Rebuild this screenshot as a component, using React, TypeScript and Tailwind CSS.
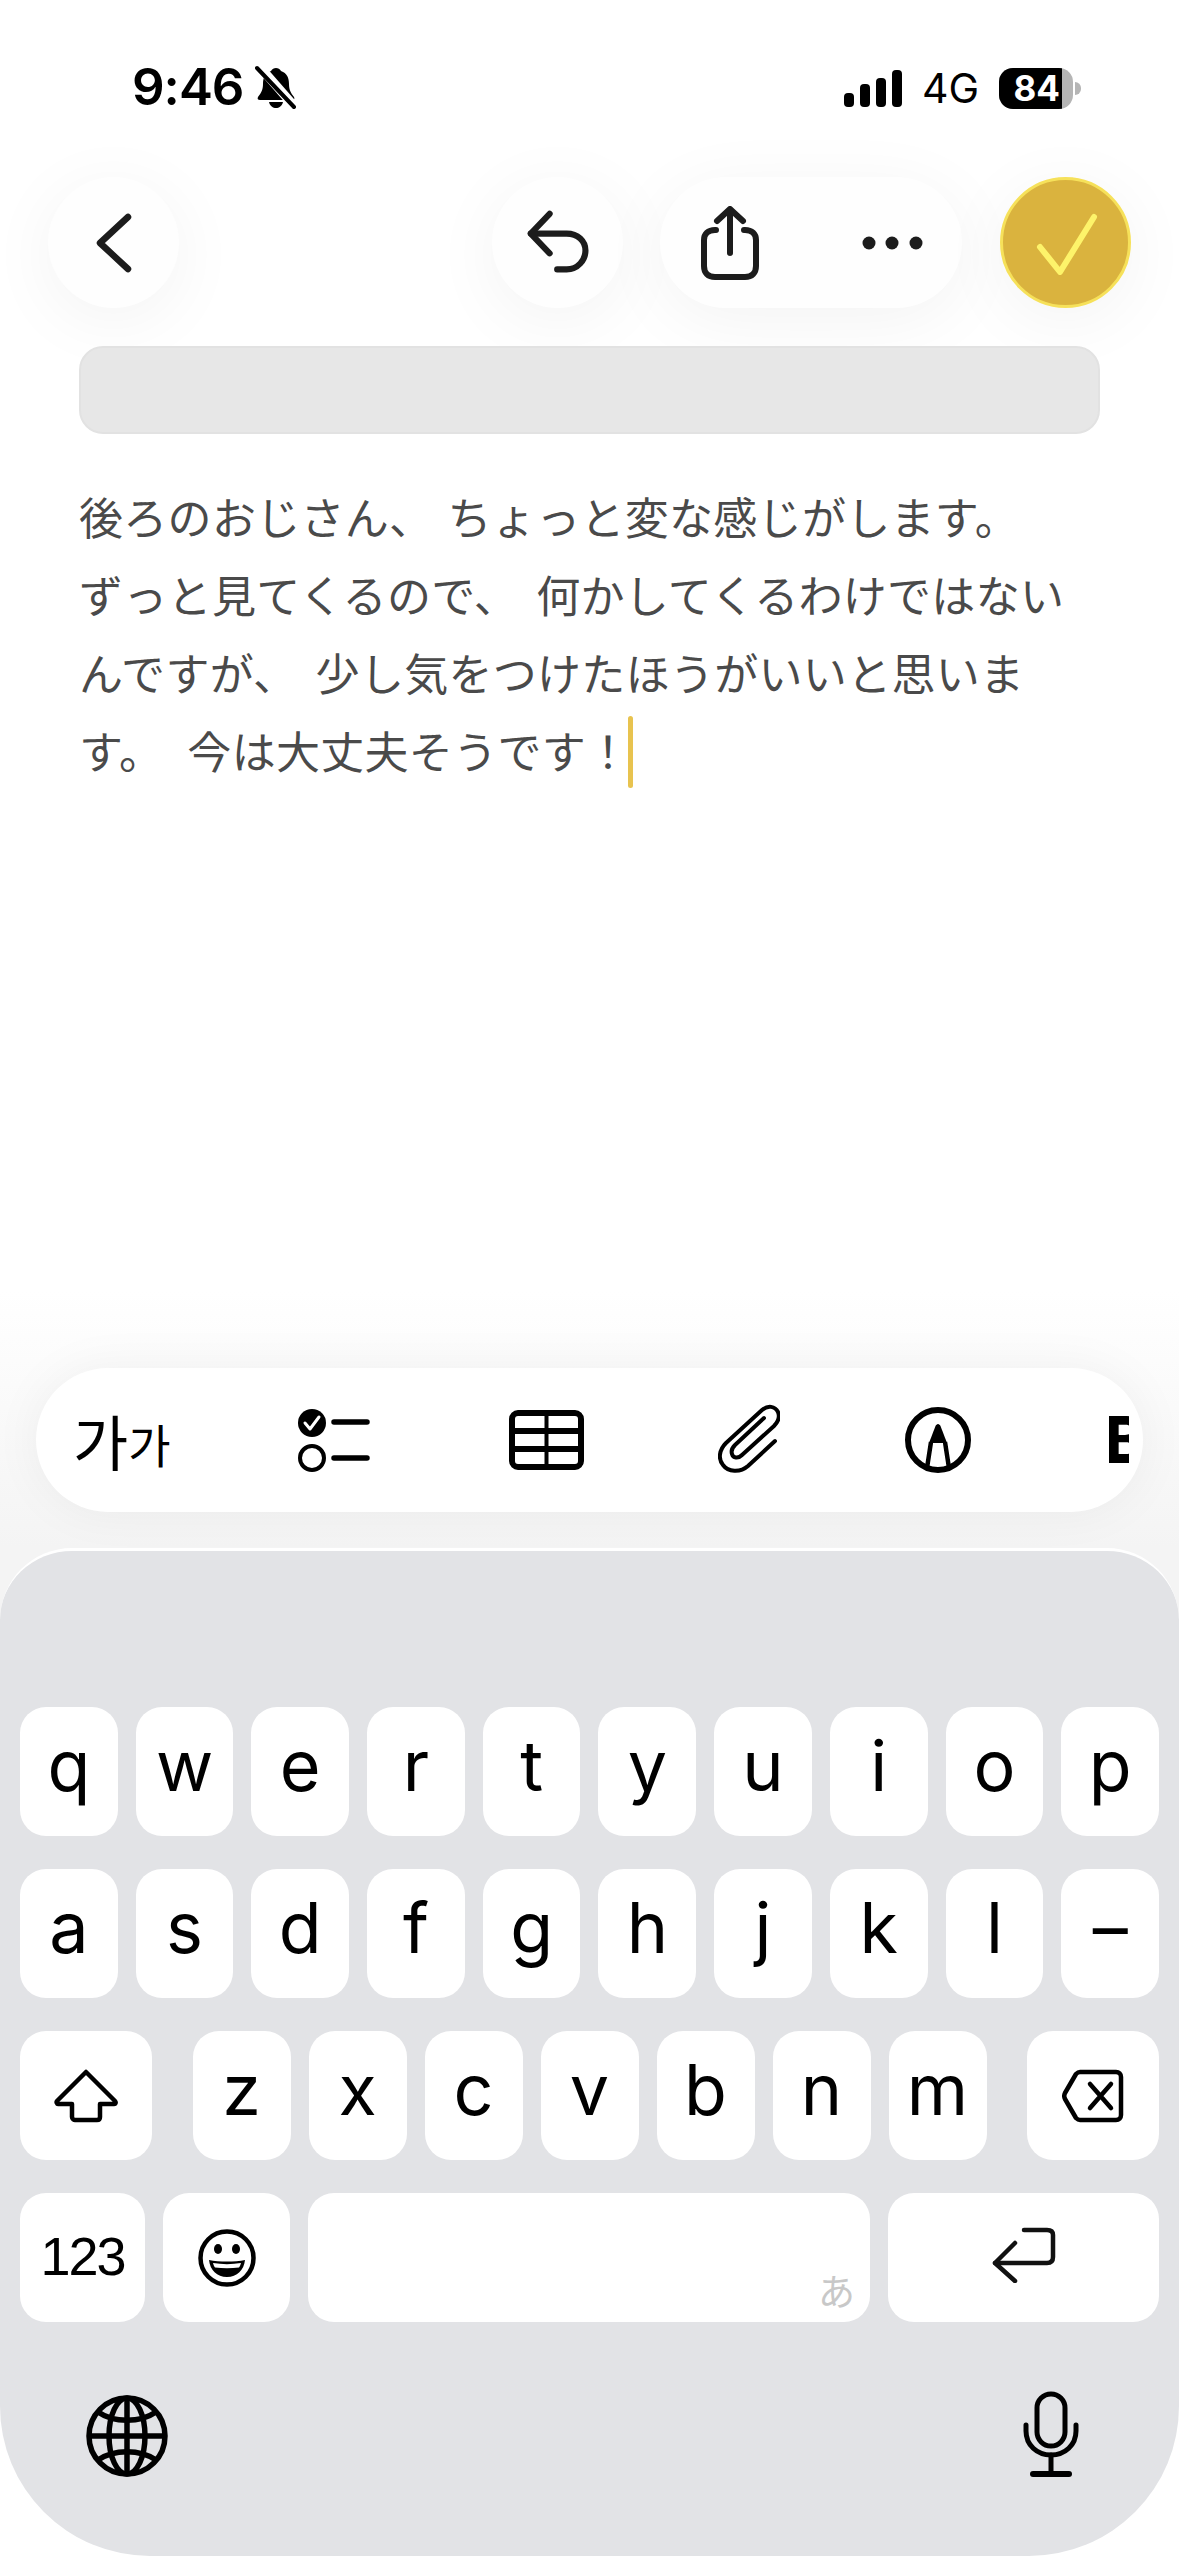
import React from 'react';

const ROW_ONE = ['q', 'w', 'e', 'r', 't', 'y', 'u', 'i', 'o', 'p'];
const ROW_TWO = ['a', 's', 'd', 'f', 'g', 'h', 'j', 'k', 'l', '–'];
const ROW_THREE = ['z', 'x', 'c', 'v', 'b', 'n', 'm'];

const Key: React.FC<{ label: string; className?: string }> = ({ label, className = '' }) => (
  <div
    className={`flex h-[129px] items-center justify-center rounded-[26px] bg-white pb-[12px] font-['Inter',sans-serif] text-[70px] leading-none font-normal text-black ${className}`}
  >
    {label}
  </div>
);

const IconKey: React.FC<{ className?: string; children: React.ReactNode }> = ({ className = '', children }) => (
  <div className={`flex h-[129px] items-center justify-center rounded-[26px] bg-white ${className}`}>{children}</div>
);

const CircleButton: React.FC<{ className?: string; children: React.ReactNode }> = ({ className = 'bg-[#fefefe]', children }) => (
  <div
    className={`flex h-[131px] w-[131px] shrink-0 items-center justify-center rounded-full shadow-[0_12px_70px_rgba(0,0,0,0.05)] ${className}`}
  >
    {children}
  </div>
);

const StatusBar = () => (
  <div className="flex h-[177px] items-start justify-between pt-[61px] pr-[98px] pl-[132px]">
    <div className="flex items-center gap-[12px]">
      <span className="font-['Inter',sans-serif] text-[51px] leading-[52px] font-semibold tracking-[-1px] text-black">9:46</span>
      <svg width="42" height="44" viewBox="0 0 42 44">
        <path d="M21 3c2 0 4 1 5 3 6 2 8 7 8 13 0 6 2 9 5 13 1 2 0 3-2 3H5c-2 0-3-1-2-3 3-4 5-7 5-13 0-6 2-11 8-13 1-2 3-3 5-3z" fill="#000" />
        <path d="M14 37h14c-1 4-4 6-7 6s-6-2-7-6z" fill="#000" />
        <path d="M5 2l34 39" stroke="#fff" strokeWidth="9" />
        <path d="M2 3l37 39" stroke="#000" strokeWidth="4" strokeLinecap="round" />
      </svg>
    </div>
    <div className="mt-[6px] flex items-center">
      <svg width="58" height="37" viewBox="0 0 58 37" fill="#000">
        <rect x="0" y="23" width="10" height="14" rx="4" />
        <rect x="16" y="14" width="10" height="23" rx="4" />
        <rect x="32" y="8" width="10" height="29" rx="4" />
        <rect x="48" y="0" width="10" height="37" rx="4" />
      </svg>
      <span className="ml-[20px] font-['Inter',sans-serif] text-[41px] leading-[42px] font-normal text-black">4G</span>
      <div className="relative ml-[20px] flex h-[41px] w-[74px] overflow-hidden rounded-[14px] bg-[#b5b5b5]">
        <div className="flex h-full w-[63px] items-center justify-end bg-black pr-[2px] font-['Inter',sans-serif] text-[35px] leading-none font-bold text-white">
          84
        </div>
      </div>
      <div className="ml-[2px] h-[13px] w-[6px] rounded-r-full bg-[#b5b5b5]" />
    </div>
  </div>
);

const Header = () => (
  <div className="flex h-[131px] items-center px-[48px]">
    <CircleButton>
      <svg width="44" height="64" viewBox="0 0 44 64" fill="none" stroke="#1c1c1c" strokeWidth="6.5" strokeLinecap="round" strokeLinejoin="round">
        <path d="M36 6 8 32l28 26" />
      </svg>
    </CircleButton>
    <CircleButton className="ml-auto bg-[#fefefe] pl-[4px]">
      <svg width="68" height="66" viewBox="0 0 72 70" fill="none" stroke="#1c1c1c" strokeWidth="6.5" strokeLinecap="round" strokeLinejoin="round">
        <path d="M25 4 5 25l20 21" />
        <path d="M5 25h38c12 0 20 8 20 18s-8 20-20 20H33" />
      </svg>
    </CircleButton>
    <div className="ml-[37px] flex h-[131px] w-[302px] items-center rounded-full bg-[#fefefe] pl-[41px] shadow-[0_12px_70px_rgba(0,0,0,0.05)]">
      <svg width="58" height="74" viewBox="0 0 58 74" fill="none" stroke="#1c1c1c" strokeWidth="6" strokeLinecap="round" strokeLinejoin="round">
        <path d="M15 24H14C7 24 3 28 3 34v26c0 7 4 11 11 11h30c7 0 11-4 11-11V34c0-6-4-10-11-10h-1" />
        <path d="M29 47V4" />
        <path d="M16 15 29 3l13 12" />
      </svg>
      <svg className="ml-[103px]" width="62" height="14" viewBox="0 0 62 14" fill="#1c1c1c">
        <circle cx="7" cy="7" r="6.5" />
        <circle cx="30" cy="7" r="6.5" />
        <circle cx="54" cy="7" r="6.5" />
      </svg>
    </div>
    <CircleButton className="ml-[38px] border-[3px] border-[#f6e15a] bg-[#dab33e]">
      <svg width="64" height="64" viewBox="0 0 64 64" fill="none" stroke="#fdf36a" strokeWidth="6" strokeLinecap="round" strokeLinejoin="round">
        <path d="M6 36l20 25L60 6" />
      </svg>
    </CircleButton>
  </div>
);

const Toolbar = () => (
  <div className="mx-[36px] flex h-[144px] items-center overflow-hidden rounded-[72px] bg-white pl-[37px] shadow-[0_0_50px_rgba(0,0,0,0.05)]">
    <div className="flex w-[106px] shrink-0 items-end font-['Noto_Sans_CJK_KR',sans-serif] font-normal text-black">
      <span className="text-[60px] leading-[66px]">가</span>
      <span className="text-[46px] leading-[60px]">가</span>
    </div>
    <svg className="ml-[119px] shrink-0" width="72" height="64" viewBox="0 0 72 64">
      <circle cx="14" cy="15" r="14" fill="#000" />
      <path d="M7 15l5 6 9-12" fill="none" stroke="#fff" strokeWidth="3" strokeLinecap="round" strokeLinejoin="round" />
      <circle cx="14" cy="50" r="12" fill="none" stroke="#000" strokeWidth="4" />
      <path d="M36 14h33M36 50h33" stroke="#000" strokeWidth="5.5" strokeLinecap="round" />
    </svg>
    <svg className="ml-[139px] shrink-0" width="75" height="60" viewBox="0 0 75 60" fill="none" stroke="#000">
      <rect x="3" y="3" width="69" height="54" rx="6" strokeWidth="6" />
      <path d="M2 21h71M2 39h71" strokeWidth="6" />
      <path d="M37.500 4v52" strokeWidth="4" />
    </svg>
    <svg className="-mt-[2px] ml-[134px] shrink-0" width="62" height="70" viewBox="0 0 62 70" fill="none" stroke="#000" strokeWidth="4" strokeLinecap="round" strokeLinejoin="round">
      <path d="M57 37 30 62C22 69 10 68 5 61 0 55 1 46 8 39L44 6c6-5 13-4 16 2 2 5 0 10-4 14L24 51c-4 4-9 3-10-1-1-3 0-6 3-9l29-27" />
    </svg>
    <svg className="ml-[124px] shrink-0" width="68" height="68" viewBox="0 0 68 68" fill="none">
      <circle cx="34" cy="34" r="30" stroke="#000" strokeWidth="6" />
      <path d="M34 18c1 0 2 1 2.500 2L43 37H25l6.500-17c.5-1 1.500-2 2.500-2z" fill="#000" />
      <path d="M27 36l-4 26M41 36l4 26" stroke="#000" strokeWidth="4.500" />
    </svg>
    <div className="ml-[137px] w-[20px] shrink-0 overflow-hidden">
      <span className="-ml-[5px] block font-['Inter',sans-serif] text-[64px] leading-none font-extrabold text-black">B</span>
    </div>
  </div>
);

const Keyboard = () => (
  <div className="mt-[36px] flex h-[1008px] flex-col rounded-t-[72px] rounded-b-[150px] border-t-[3px] border-white bg-[#e2e3e6] px-[20px] pt-[156px]">
    <div className="grid grid-cols-10 gap-[18px]">
      {ROW_ONE.map((k) => (
        <Key key={k} label={k} />
      ))}
    </div>
    <div className="mt-[33px] grid grid-cols-10 gap-[18px]">
      {ROW_TWO.map((k) => (
        <Key key={k} label={k} />
      ))}
    </div>
    <div className="mt-[33px] flex justify-between">
      <IconKey className="w-[132px]">
        <svg width="64" height="54" viewBox="0 0 64 54" fill="none" stroke="#000" strokeWidth="4.500" strokeLinejoin="round">
          <path d="M32 3 3 32c-1 1 0 3 1 3h14v13c0 2 2 3 3 3h22c2 0 3-1 3-3V35h14c2 0 2-2 1-3z" />
        </svg>
      </IconKey>
      <div className="flex gap-[18px]">
        {ROW_THREE.map((k) => (
          <Key key={k} label={k} className="w-[98px]" />
        ))}
      </div>
      <IconKey className="w-[132px]">
        <svg width="62" height="54" viewBox="0 0 62 54" fill="none" stroke="#000" strokeWidth="4.500" strokeLinecap="round" strokeLinejoin="round">
          <path d="M18 3h36c3 0 5 2 5 5v38c0 3-2 5-5 5H18c-2 0-3-1-4-2L3 30c-1-2-1-4 0-6L14 5c1-1 2-2 4-2z" />
          <path d="M28 15l21 24M49 15 28 39" />
        </svg>
      </IconKey>
    </div>
    <div className="mt-[33px] flex gap-[18px]">
      <div className="flex h-[129px] w-[125px] items-center justify-center rounded-[26px] bg-white pb-[4px] font-['Liberation_Sans',sans-serif] text-[54px] leading-none tracking-[-2px] text-black">
        123
      </div>
      <IconKey className="w-[127px]">
        <svg width="58" height="58" viewBox="0 0 58 58" fill="none">
          <circle cx="29" cy="29" r="26.500" stroke="#000" strokeWidth="4.500" />
          <ellipse cx="20" cy="20" rx="4" ry="5" fill="#000" />
          <ellipse cx="38" cy="20" rx="4" ry="5" fill="#000" />
          <path d="M11 31c10 2 26 2 36 0-1 10-8 17-18 17S12 41 11 31z" fill="#000" />
          <path d="M15 34c9 1.500 19 1.500 28 0-.5 2-1 3-2 4.500-8 1-16 1-24 0-1-1.500-1.500-2.500-2-4.500z" fill="#fff" />
        </svg>
      </IconKey>
      <div className="relative h-[129px] flex-1 rounded-[26px] bg-white">
        <span className="absolute right-[15px] bottom-[13px] font-['Noto_Sans_CJK_JP',sans-serif] text-[37px] leading-none text-[#c8c8c8]">あ</span>
      </div>
      <IconKey className="w-[271px] pb-[5px]">
        <svg width="64" height="56" viewBox="0 0 64 56" fill="none" stroke="#111" strokeWidth="4.500" strokeLinecap="round" strokeLinejoin="round">
          <path d="M23 16 3 36l20 18" />
          <path d="M3 36h52c4 0 6-2 6-6V8c0-3-2-5-6-5H32" />
        </svg>
      </IconKey>
    </div>
    <div className="mt-[73px] flex items-start justify-between pr-[79px] pl-[66px]">
      <svg width="82" height="82" viewBox="0 0 82 82" fill="none" stroke="#000" strokeWidth="5.500">
        <circle cx="41" cy="41" r="38" />
        <ellipse cx="41" cy="41" rx="18" ry="38" />
        <path d="M41 3v76M3 41h76" />
        <path d="M12 17c16 11 42 11 58 0M12 65c16-11 42-11 58 0" />
      </svg>
      <svg className="-mt-[4px]" width="58" height="88" viewBox="0 0 58 88" fill="none" stroke="#000" strokeLinecap="round">
        <rect x="15" y="3" width="28" height="52" rx="14" strokeWidth="5" />
        <path d="M4 34v6c0 14 11 24 25 24s25-10 25-24v-6" strokeWidth="5" />
        <path d="M29 64v18" strokeWidth="5" />
        <path d="M11 83h36" strokeWidth="6" />
      </svg>
    </div>
  </div>
);

export default function App() {
  return (
    <div className="flex h-[2556px] w-[1179px] flex-col overflow-hidden bg-white">
      <StatusBar />
      <Header />
      <div className="mx-[79px] mt-[38px] h-[88px] rounded-[24px] border-2 border-[#e2e2e2] bg-[#e7e7e7]" />
      <div className="mt-[43px] flex-1 pl-[79px] font-['Noto_Sans_CJK_JP',sans-serif] text-[44px] leading-[78px] font-normal tracking-[0.3px] whitespace-nowrap text-[#4a4a4a]">
        <div className="[word-spacing:4px]">後ろのおじさん、 ちょっと変な感じがします。</div>
        <div className="[word-spacing:8px]">ずっと見てくるので、 何かしてくるわけではない</div>
        <div className="[word-spacing:8px]">んですが、 少し気をつけたほうがいいと思いま</div>
        <div className="flex items-center">
          <span className="[word-spacing:14px]">す。 今は大丈夫そうです！</span>
          <span className="mt-[4px] -ml-[2px] h-[72px] w-[5px] rounded-full bg-[#e8c34f]" />
        </div>
      </div>
      <div className="h-[1266px] bg-[linear-gradient(to_bottom,#ffffff_0px,#f4f4f4_258px,#f4f4f4_400px,#ffffff_401px)] pt-[78px]">
        <Toolbar />
        <Keyboard />
      </div>
    </div>
  );
}
